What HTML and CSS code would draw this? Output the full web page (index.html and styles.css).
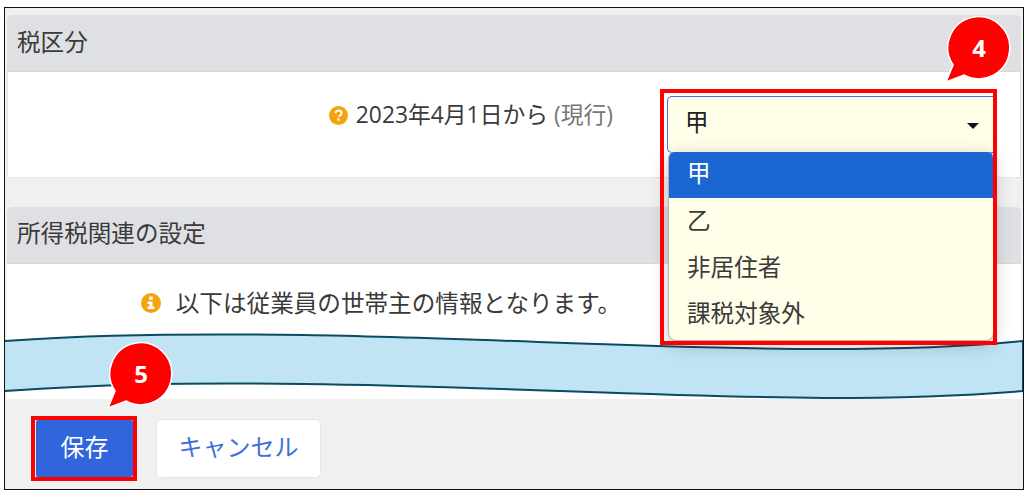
FILE: index.html
```html
<!DOCTYPE html>
<html lang="ja">
<head>
    <meta charset="UTF-8">
    <title>税区分</title>
    <link rel="stylesheet" href="styles.css">
</head>
<body>
    <div class="frame">
        <div class="panel">
            <div class="panel-head">税区分</div>
            <div class="panel-body first">
                <div class="label">
                    <svg class="icon small" viewBox="0 0 20 20">
                        <circle cx="10" cy="10" r="10" fill="#f5a30c"/>
                        <path d="M6.800 7.600c.2-1.900 1.500-2.900 3.300-2.900 1.900 0 3.200 1.100 3.200 2.700 0 1.300-.8 1.900-1.600 2.400-.7.400-1 .7-1 1.500" fill="none" stroke="#fff" stroke-width="2.100"/>
                        <rect x="8.700" y="13" width="2.400" height="2.400" fill="#fff"/>
                    </svg>
                    <span>2023年4月1日から <span class="muted">(現行)</span></span>
                </div>
                <div class="select-wrap">
                    <div class="select">
                        <span>甲</span>
                        <i class="caret"></i>
                    </div>
                    <ul class="menu">
                        <li class="selected">甲</li>
                        <li>乙</li>
                        <li>非居住者</li>
                        <li>課税対象外</li>
                    </ul>
                    <div class="highlight menu-mark"></div>
                </div>
            </div>
        </div>

        <div class="panel second">
            <div class="panel-head">所得税関連の設定</div>
            <div class="panel-body">
                <div class="label">
                    <svg class="icon" viewBox="0 0 20 20">
                        <circle cx="10" cy="10" r="10" fill="#f5a30c"/>
                        <rect x="8" y="3.600" width="3.800" height="3.200" rx=".6" fill="#fff"/>
                        <path d="M6.600 8.400h4.900v5.200h1.900v2.500H6.600v-2.500h1.800v-2.700H6.600z" fill="#fff"/>
                    </svg>
                    <span>以下は従業員の世帯主の情報となります。</span>
                </div>
            </div>
        </div>

        <div class="footer">
            <button class="btn primary">保存<span class="highlight"></span></button>
            <button class="btn">キャンセル</button>
        </div>

        <svg class="wave" viewBox="0 0 1020 66">
            <path d="M0 6C60 2 130-2 300 0C480 3 660 14 820 14C900 14 970 11 1019 6V56C970 60 900 63 820 63C660 62 480 51 300 49C170 47 90 50 0 56Z" fill="#c0e4f4" stroke="#0c4a63" stroke-width="2"/>
        </svg>

        <svg class="bubble bubble-four" viewBox="0 0 68 68">
            <path d="M2 66L9 49A31 31 0 1 1 20 59Z" fill="#f00" stroke="#fff" stroke-width="1.500"/>
            <text x="35" y="41">4</text>
        </svg>
        <svg class="bubble bubble-five" viewBox="0 0 68 68">
            <path d="M2 66L9 49A31 31 0 1 1 20 59Z" fill="#f00" stroke="#fff" stroke-width="1.500"/>
            <text x="35" y="41">5</text>
        </svg>
    </div>
</body>
</html>
```
FILE: styles.css
```css
* {
    box-sizing: border-box;
}
body {
    margin: 0;
    height: 494px;
    overflow: hidden;
    background-color: #fff;
    font-family: "Open Sans", "Noto Sans CJK JP", sans-serif;
    font-size: 23.600px;
    color: #3a3a3a;
}
.frame {
    position: relative;
    width: 1020px;
    height: 483px;
    margin: 7px 0 0 4px;
    padding: 7px 2px 0;
    border: 1px solid #111;
    background-color: #f0f0f0;
    overflow: hidden;
}
.panel-head {
    height: 57px;
    padding-left: 10px;
    line-height: 54px;
    background-color: #dfe0e4;
    border-radius: 5px 5px 0 0;
    border-bottom: 1px solid #d8d8dc;
}
.second .panel-head {
    line-height: 52px;
}
.panel-body {
    display: flex;
    align-items: flex-start;
    background-color: #fff;
    padding-top: 24px;
}
.panel-body.first {
    height: 106px;
    border: 1px solid #e4e4e4;
    border-top: none;
}
.second {
    margin-top: 29px;
}
.second .panel-body {
    height: 135px;
    padding-top: 20px;
}
.label {
    display: flex;
    justify-content: flex-end;
    align-items: center;
    gap: 15px;
    width: 614px;
    height: 38px;
    line-height: 38px;
    flex-shrink: 0;
}
.first .label {
    width: 605px;
    gap: 8px;
}
.first .label > span {
    font-size: 22.800px;
    margin-top: -1px;
}
.muted {
    color: #777;
}
.icon {
    width: 20px;
    height: 20px;
}
.icon.small {
    width: 19px;
    height: 19px;
}
.select-wrap {
    position: relative;
    z-index: 2;
    width: 327px;
    margin-left: 54px;
}
.select {
    display: flex;
    justify-content: space-between;
    align-items: center;
    height: 57px;
    padding: 0 15px 8px 17px;
    background-color: #fffee9;
    border: 1px solid #3f74e0;
    border-right: none;
    border-radius: 5px 0 0 5px;
    color: #222;
}
.caret {
    margin-top: 11px;
    border-top: 6px solid #111;
    border-left: 6px solid transparent;
    border-right: 6px solid transparent;
}
.menu {
    position: absolute;
    top: 56px;
    left: 1px;
    width: 326px;
    height: 189px;
    margin: 0;
    padding: 0;
    list-style: none;
    background-color: #fffee9;
    border: 1px solid #b5b5b0;
    border-top: none;
    border-radius: 6px 6px 8px 8px;
    box-shadow: 0 4px 18px rgba(0, 0, 0, .22);
    overflow: hidden;
}
.menu li {
    height: 46.500px;
    padding-left: 18px;
    line-height: 44px;
}
.menu li.selected {
    height: 46px;
    line-height: 42px;
    background-color: #1a67d2;
    color: #fff;
}
.highlight {
    position: absolute;
    border: 4px solid #f00;
    pointer-events: none;
}
.menu-mark {
    top: -7px;
    left: -7px;
    width: 337px;
    height: 256px;
}
.footer {
    position: absolute;
    left: 0;
    right: 0;
    bottom: 0;
    display: flex;
    align-items: flex-start;
    gap: 23px;
    height: 90px;
    padding: 21px 0 0 31px;
    background-color: #f0f0f0;
}
.btn {
    position: relative;
    height: 59px;
    width: 165px;
    margin-top: -1px;
    padding-bottom: 7px;
    font: inherit;
    font-size: 24px;
    color: #3d6fdc;
    background-color: #fff;
    border: 1px solid #dce5f8;
    border-radius: 5px;
}
.btn.primary {
    width: 97px;
    height: 57px;
    margin-top: 0;
    color: #fff;
    background-color: #3065dc;
    border: none;
    border-radius: 2px;
}
.btn .highlight {
    top: -4px;
    left: -5px;
    right: -4px;
    bottom: -4px;
}
.wave {
    position: absolute;
    left: -1px;
    top: 327px;
    width: 1020px;
    height: 66px;
    overflow: visible;
}
.bubble {
    position: absolute;
    width: 68px;
    height: 68px;
    z-index: 3;
}
.bubble text {
    font-family: "Open Sans", sans-serif;
    font-weight: 700;
    font-size: 24px;
    fill: #fff;
    text-anchor: middle;
}
.bubble-four {
    left: 939px;
    top: 8px;
}
.bubble-five {
    left: 101px;
    top: 334px;
}
```
